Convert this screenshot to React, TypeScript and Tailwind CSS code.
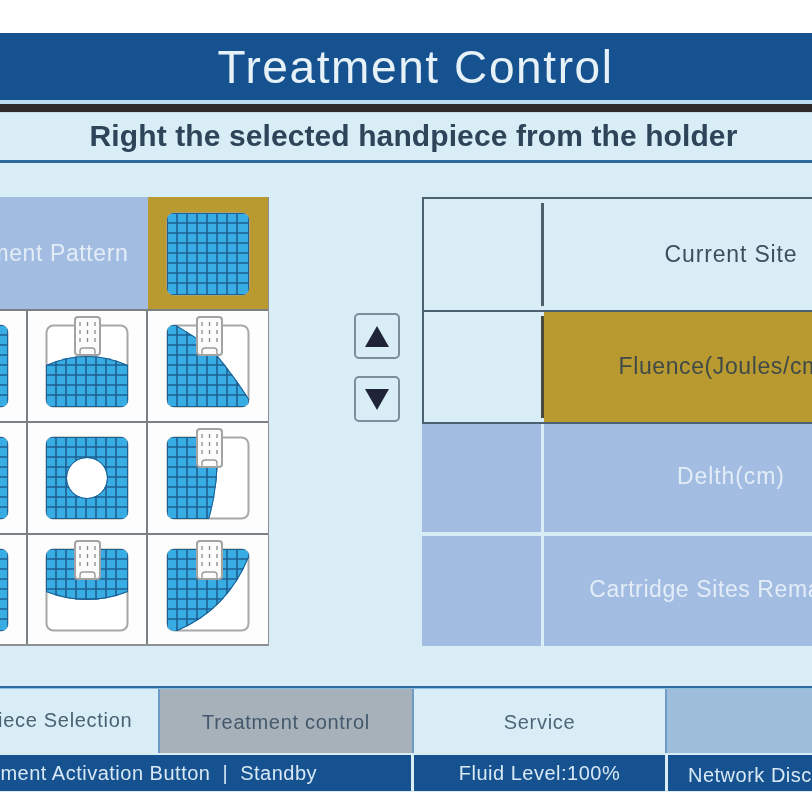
const GRID = [10, 20, 30, 40, 50, 60, 70];

// fill outlines for the pattern cells, in a 82x82 box
const SHAPES: Record<string, string> = {
  full: "M0 0H82V82H0Z",
  bottom: "M0 40Q41 22 82 40V82H0Z",
  diag: "M0 0H9L33 15L50 30Q68 52 82 74V82H0Z",
  ring: "M0 0H82V82H0ZM21 41A20 20 0 1 0 61 41A20 20 0 1 0 21 41Z",
  left: "M0 0H51Q52 50 42 82H0Z",
  top: "M0 0H82V43Q41 59 0 43Z",
  corner: "M0 0H82V8Q60 62 8 83H0Z",
};

function Handpiece({ x }: { x: number }) {
  return (
    <g transform={`translate(${x} 0)`}>
      <rect x="31" y="-8" width="25" height="38" rx="3" fill="#fbfbfb" stroke="#a3a3a3" strokeWidth="2" />
      {[36, 43.5, 51].map((px) =>
        [-3, 5, 13].map((py) => (
          <line key={px + "-" + py} x1={px} y1={py} x2={px} y2={py + 4} stroke="#8a8a8a" strokeWidth="1.3" />
        ))
      )}
      <path d="M36 29V26Q36 23 39 23H48Q51 23 51 26V29" fill="none" stroke="#9a9a9a" strokeWidth="1.4" />
    </g>
  );
}

function Pattern({ shape, hand }: { shape: string; hand?: number }) {
  const id = "clip-" + shape;
  return (
    <svg viewBox="0 0 82 82" className="block w-[82px] h-[82px] overflow-visible">
      <defs>
        <clipPath id={id}>
          <path d={SHAPES[shape]} clipRule="evenodd" />
        </clipPath>
        <clipPath id="clip-round">
          <rect width="82" height="82" rx="7" />
        </clipPath>
      </defs>
      <rect x="0.5" y="0.5" width="81" height="81" rx="7" fill="#fff" stroke="#a8a8a8" strokeWidth="2" />
      <g clipPath="url(#clip-round)">
        <g clipPath={`url(#${id})`}>
          <rect width="82" height="82" fill="#37ade4" />
          {GRID.map((n) => (
            <g key={n} stroke="#1f5f92" strokeWidth="1.6">
              <line x1={n} y1="0" x2={n} y2="82" />
              <line x1="0" y1={n} x2="82" y2={n} />
            </g>
          ))}
          <path d={SHAPES[shape]} fill="none" stroke="#1f5f92" strokeWidth="2" />
        </g>
      </g>
      {hand !== undefined && <Handpiece x={hand} />}
    </svg>
  );
}

function PatternCell({ shape, hand, last }: { shape: string; hand?: number; last?: boolean }) {
  return (
    <div className={`flex items-center justify-center bg-[#fdfdfd] border-t-2 border-[#7b8084] ${last ? "" : "border-r-2"}`}>
      <Pattern shape={shape} hand={hand} />
    </div>
  );
}

function Tab({ label, className }: { label: string; className: string }) {
  return (
    <div className={`flex items-center justify-center h-full pt-[2px] text-[20px] tracking-[0.7px] ${className}`}>
      {label}
    </div>
  );
}

function Arrow({ dir }: { dir: "up" | "down" }) {
  return (
    <button className="flex items-center justify-center w-[46px] h-[46px] rounded-[5px] border-2 border-[#7d8d99] bg-[#d9edf7]">
      <svg width="26" height="24" viewBox="0 0 26 24">
        <path d={dir === "up" ? "M13 2L25 23H1Z" : "M13 23L25 2H1Z"} fill="#1f2438" />
      </svg>
    </button>
  );
}

export default function App() {
  return (
    <div className="w-[812px] h-[812px] overflow-hidden bg-white pt-[33px] font-['Liberation_Sans',Arial,sans-serif] blur-[0.4px]">
      {/* Title bar */}
      <div className="h-[67px] bg-[#15528f] flex items-center justify-center pl-[19px] pt-[2px] text-[46px] tracking-[1.6px] text-[#e6f1f8]">
        Treatment Control
      </div>
      <div className="h-[4px] bg-[#bcdcef]" />
      <div className="h-[8px] bg-[#2c2a2b]" />

      {/* Prompt */}
      <div className="h-[48px] bg-[#d9edf7] flex items-center justify-center pl-[15px] pb-[2px] text-[30px] font-bold tracking-[0.1px] text-[#2d4459] border-t border-[#c4ddec]">
        Right the selected handpiece from the holder
      </div>
      <div className="h-[3px] bg-[#2e6a9e]" />

      {/* Main panel */}
      <div className="h-[523px] bg-[#d9edf7] pt-[34px] flex overflow-hidden">
        <div className="shrink-0 w-[361px] h-[449px] ml-[-92px] grid grid-cols-[120px_120px_120px] grid-rows-[112px_112px_112px_111px] border-b-2 border-r border-[#8b9094]">
          <div className="col-span-2 bg-[#a3bde2] flex items-center justify-center pl-[6px] text-[23px] tracking-[0.6px] text-[#e3edf7]">
            Treatment Pattern
          </div>
          <div className="bg-[#b99a30] flex items-center justify-center pt-[2px]">
            <Pattern shape="full" />
          </div>
          <PatternCell shape="full" />
          <PatternCell shape="bottom" hand={-2} />
          <PatternCell shape="diag" hand={-1} last />
          <PatternCell shape="full" />
          <PatternCell shape="ring" />
          <PatternCell shape="left" hand={-1} last />
          <PatternCell shape="full" />
          <PatternCell shape="top" hand={-2} />
          <PatternCell shape="corner" hand={-1} last />
        </div>

        <div className="shrink-0 ml-[85px] pt-[116px] flex flex-col gap-[17px]">
          <Arrow dir="up" />
          <Arrow dir="down" />
        </div>

        {/* Readouts */}
        <div className="shrink-0 ml-[22px] w-[496px] flex flex-col">
          <div className="h-[227px] border-2 border-r-0 border-[#4d6270] flex flex-col">
            <div className="h-[111px] flex items-stretch">
              <div className="w-[120px] py-[4px] flex justify-end">
                <div className="w-[3px] bg-[#4d5f6b]" />
              </div>
              <div className="flex-1 flex items-center justify-center text-[23px] tracking-[0.85px] text-[#3c4f5f]">
                Current Site
              </div>
            </div>
            <div className="h-[112px] border-t-2 border-[#4d6270] flex items-stretch">
              <div className="w-[120px] py-[4px] flex justify-end">
                <div className="w-[3px] bg-[#4a4a3c]" />
              </div>
              <div className="flex-1 bg-[#b99a30] flex items-center justify-center pb-[2px] text-[23px] tracking-[0.6px] text-[#3f4a48]">
                Fluence(Joules/cm2)
              </div>
            </div>
          </div>
          <div className="h-[108px] flex gap-[3px]">
            <div className="w-[119px] bg-[#a3bde2]" />
            <div className="flex-1 bg-[#a3bde2] flex items-center justify-center pb-[3px] text-[23px] tracking-[0.9px] text-[#e3edf7]">
              Delth(cm)
            </div>
          </div>
          <div className="mt-[4px] h-[110px] flex gap-[3px]">
            <div className="w-[119px] bg-[#a3bde2]" />
            <div className="flex-1 bg-[#a3bde2] flex items-center justify-center pb-[3px] text-[23px] tracking-[0.6px] text-[#e3edf7]">
              Cartridge Sites Remaining
            </div>
          </div>
        </div>
      </div>

      {/* Tabs */}
      <div className="h-[2px] bg-[#2e6a9e]" />
      <div className="h-[65px] bg-[#d9edf7] flex ml-[-92px] w-[1156px] border-t border-[#8dbcdc]">
        <Tab label="Handpiece Selection" className="w-[250px] text-[#4a6073] pl-[2px] pb-[4px]" />
        <div className="w-[2px] bg-[#6d9bc6]" />
        <Tab label="Treatment control" className="w-[252px] bg-[#a6b1ba] text-[#44586b]" />
        <div className="w-[2px] bg-[#6d9bc6]" />
        <Tab label="Service" className="w-[251px] text-[#4f6578]" />
        <div className="w-[2px] bg-[#6d9bc6]" />
        <Tab label="" className="w-[397px] bg-[#9dbddb]" />
      </div>

      {/* Status bar */}
      <div className="h-[39px] bg-[#d9edf7] pt-[2px] flex gap-[3px] ml-[-92px] w-[1156px] text-[20px] tracking-[0.5px] text-[#d8e8f5]">
        <div className="w-[503px] h-[36px] bg-[#15528f] flex items-center gap-[12px] pl-[44px]">
          <span>Treatment Activation Button</span>
          <span>|</span>
          <span>Standby</span>
        </div>
        <div className="w-[251px] h-[36px] bg-[#15528f] flex items-center justify-center">Fluid Level:100%</div>
        <div className="flex-1 h-[36px] bg-[#15528f] flex items-center pl-[20px] pt-[3px]">Network Disconnected</div>
      </div>
    </div>
  );
}
